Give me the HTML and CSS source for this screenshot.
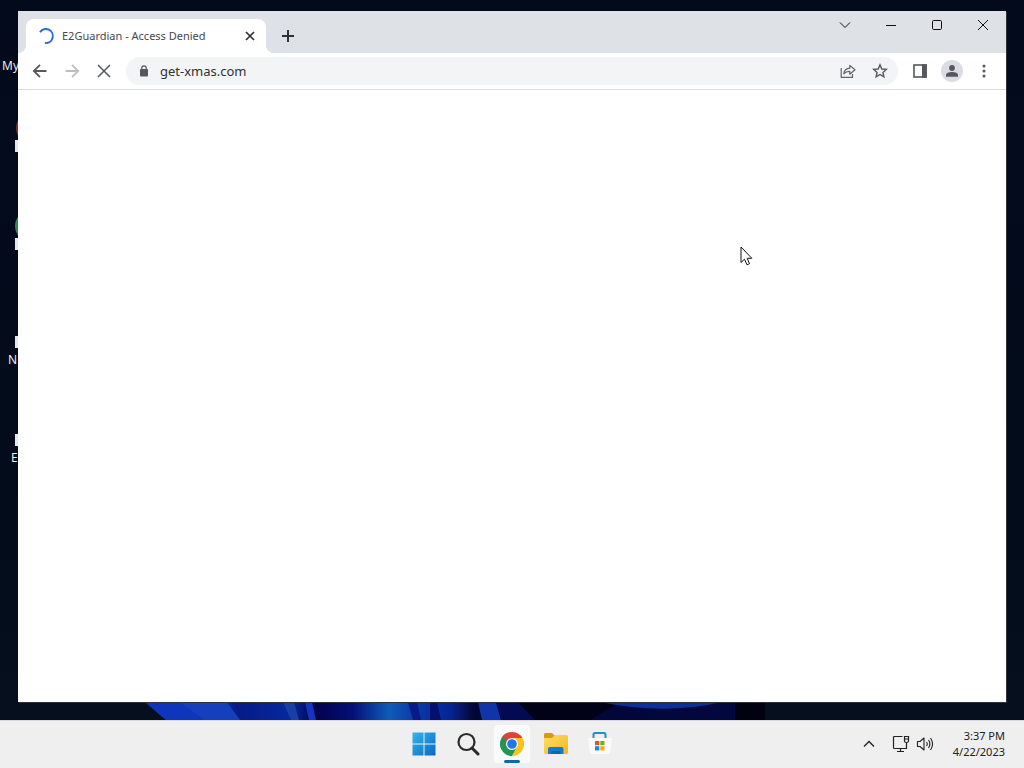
FILE: index.html
```html
<!DOCTYPE html>
<html lang="en">
<head>
<meta charset="utf-8">
<title>Desktop</title>
<link rel="stylesheet" href="styles.css">
</head>
<body>
<div class="desktop">
  <svg class="wallpaper" viewBox="0 0 1024 20" preserveAspectRatio="none" aria-hidden="true">
    <defs>
      <linearGradient id="bloom"><stop offset="0" stop-color="#0c2fae"/><stop offset=".1" stop-color="#1447c4"/><stop offset=".15" stop-color="#061b86"/><stop offset=".24" stop-color="#0528a0"/><stop offset=".28" stop-color="#02024a"/><stop offset=".34" stop-color="#040f78"/><stop offset=".4" stop-color="#0d5cb8"/><stop offset=".44" stop-color="#0a3ba8"/><stop offset=".5" stop-color="#062494"/><stop offset=".54" stop-color="#020634"/><stop offset="1" stop-color="#020740"/></linearGradient>
    </defs>
    <path d="M145 0H755L740 20H166Z" fill="url(#bloom)"/>
    <path d="M145 0H180L205 20H166Z" fill="#0d36bd"/>
    <path d="M180 0H227L240 20H205Z" fill="#1440bd"/>
    <path d="M283 0H294L299 20H291Z" fill="#173fa4"/>
    <path d="M305 0H312L316 20H309Z" fill="#1435bf"/>
    <path d="M408 0H417L421 20H413Z" fill="#08198a"/>
    <path d="M430 0H437L441 20H430Z" fill="#03106e"/>
    <path d="M478 0H496L501 20H482Z" fill="#1035a8"/>
    <path d="M496 0H518L535 20H501Z" fill="#020a54"/>
    <path d="M518 0H620L590 20H535Z" fill="#010118"/>
    <path d="M600 0Q665 15 722 0Z" fill="#0a309a"/>
    <path d="M735 0H765V20H735Z" fill="#01020f"/>
  </svg>

  <div class="shortcut shortcut-pc"><span>My PC</span></div>
  <div class="shortcut shortcut-red"><i class="disc red"></i><i class="arrow"></i></div>
  <div class="shortcut shortcut-green"><i class="disc green"></i><i class="arrow"></i></div>
  <div class="shortcut shortcut-n"><i class="arrow"></i><span>N</span></div>
  <div class="shortcut shortcut-e"><i class="arrow"></i><span>E</span></div>

  <main class="workspace">
    <section class="window">
      <header class="tabstrip">
        <div class="tab">
          <svg class="spinner" width="18" height="18" viewBox="0 0 18 18" fill="none" stroke="#2a6fd0" stroke-width="2"><path d="M3 5.2A7 7 0 1 1 8 16"/></svg>
          <span class="tab-title">E2Guardian - Access Denied</span>
          <button class="tab-close" aria-label="Close tab"><svg width="10" height="10" viewBox="0 0 10 10" stroke="#303236" stroke-width="1.7"><path d="M1 1L9 9M9 1L1 9"/></svg></button>
        </div>
        <button class="new-tab" aria-label="New tab"><svg width="14" height="14" viewBox="0 0 14 14" stroke="#303236" stroke-width="2"><path d="M7 1V13M1 7H13"/></svg></button>
        <div class="window-controls">
          <button aria-label="Search tabs"><svg width="12" height="12" viewBox="0 0 12 12" fill="none" stroke="#111"><path d="M1 3.5L6 8.5L11 3.5"/></svg></button>
          <button aria-label="Minimize"><svg width="12" height="12" viewBox="0 0 12 12" stroke="#111"><path d="M1 6.5H11"/></svg></button>
          <button aria-label="Maximize"><svg width="12" height="12" viewBox="0 0 12 12" fill="none" stroke="#111"><rect x="1.5" y="1.5" width="9" height="9" rx="1.2"/></svg></button>
          <button aria-label="Close"><svg width="12" height="12" viewBox="0 0 12 12" stroke="#111"><path d="M1 1L11 11M11 1L1 11"/></svg></button>
        </div>
      </header>
      <nav class="toolbar">
        <button class="tool" aria-label="Back"><svg width="16" height="16" viewBox="0 0 16 16" fill="none" stroke="#55585c" stroke-width="1.8"><path d="M14.5 8H2.5M8 1.8L1.8 8L8 14.2"/></svg></button>
        <button class="tool" aria-label="Forward"><svg width="16" height="16" viewBox="0 0 16 16" fill="none" stroke="#bcbec1" stroke-width="1.8"><path d="M1.5 8H13.5M8 1.8L14.2 8L8 14.2"/></svg></button>
        <button class="tool" aria-label="Stop"><svg width="14" height="14" viewBox="0 0 14 14" stroke="#55585c" stroke-width="1.5"><path d="M1 1L13 13M13 1L1 13"/></svg></button>
        <div class="omnibox">
          <svg class="lock" width="10" height="12" viewBox="0 0 10 12"><rect x="1" y="4" width="8" height="7.5" rx="1" fill="#55585c"/><path d="M2.8 4.5V3A2.2 2.2 0 0 1 7.2 3V4.5" fill="none" stroke="#55585c" stroke-width="1.2"/></svg>
          <input class="address" type="text" value="get-xmas.com" aria-label="Address">
          <button class="tool" aria-label="Share"><svg width="16" height="16" viewBox="0 0 16 16" fill="none" stroke="#5f6368" stroke-width="1.2" stroke-linejoin="round"><path d="M1.2 5V14.3H12.5V11M3.8 10.8C4.2 7.2 6.3 5.4 9.8 5.2V2.4L15 6.8L9.8 11.2V8.3C7.2 8.2 5.3 9 3.8 10.8Z"/></svg></button>
          <button class="tool" aria-label="Bookmark"><svg width="16" height="16" viewBox="0 0 16 16" fill="none" stroke="#55585c" stroke-width="1.4"><path d="M8 1.8L9.8 6L14.3 6.4L10.9 9.4L11.9 13.9L8 11.5L4.1 13.9L5.1 9.4L1.7 6.4L6.2 6Z"/></svg></button>
        </div>
        <button class="tool" aria-label="Side panel"><svg width="16" height="16" viewBox="0 0 16 16"><rect x="2" y="2" width="12" height="12" fill="none" stroke="#55585c" stroke-width="1.6"/><path d="M10 1.2H14.8V14.8H10Z" fill="#55585c"/></svg></button>
        <button class="tool avatar" aria-label="Profile"><svg width="14" height="14" viewBox="0 0 14 14" fill="#55585f"><circle cx="7" cy="4" r="2.9"/><path d="M1 12.8V11C1 8.8 4.5 8 7 8S13 8.8 13 11V12.8Z"/></svg></button>
        <button class="tool" aria-label="Menu"><svg width="4" height="14" viewBox="0 0 4 14" fill="#55585c"><circle cx="2" cy="2" r="1.5"/><circle cx="2" cy="7" r="1.5"/><circle cx="2" cy="12" r="1.5"/></svg></button>
      </nav>
      <div class="page"></div>
    </section>
  </main>

  <footer class="taskbar">
    <div></div>
    <div class="apps">
      <button class="app" aria-label="Start"><svg width="24" height="24" viewBox="0 0 24 24"><defs><linearGradient id="win" x2="1" y2="1"><stop stop-color="#35b5ee"/><stop offset="1" stop-color="#0669c4"/></linearGradient></defs><path d="M.5 .5H11.5V11.5H.5ZM12.5 .5H23.5V11.5H12.5ZM.5 12.5H11.5V23.5H.5ZM12.5 12.5H23.5V23.5H12.5Z" fill="url(#win)"/></svg></button>
      <button class="app" aria-label="Search"><svg width="24" height="24" viewBox="0 0 24 24" fill="none" stroke="#292929"><circle cx="10.5" cy="10" r="8" stroke-width="2.2"/><path d="M16 16L22 22" stroke-width="3" stroke-linecap="round"/></svg></button>
      <button class="app active" aria-label="Chrome"><svg width="24" height="24" viewBox="0 0 24 24"><path d="M12 12L1.6 6A12 12 0 0 1 22.4 6Z" fill="#db4437"/><path d="M1.6 6A12 12 0 0 0 12 24L17.2 15L12 12Z" fill="#219653"/><path d="M22.4 6A12 12 0 0 1 12 24L17.2 15L12 6Z" fill="#fbc21a"/><path d="M1.6 6L6.8 15L12 12V6H22.4L20 3H4Z" fill="#db4437"/><path d="M1.6 6L6.8 15L8 12L4 5Z" fill="#219653"/><circle cx="12" cy="12" r="6" fill="#fff"/><circle cx="12" cy="12" r="4.8" fill="#2475e8"/></svg></button>
      <button class="app" aria-label="File Explorer"><svg width="26" height="24" viewBox="0 0 26 24"><defs><linearGradient id="folder" x2="1" y2="1"><stop stop-color="#ffdc67"/><stop offset="1" stop-color="#f2b81f"/></linearGradient></defs><path d="M1 4V2.5Q1 1 2.5 1H9L12 4V8H1Z" fill="#d79a10"/><path d="M1 6H9L12 3H23.5Q25 3 25 4.5V20.5Q25 22 23.5 22H2.5Q1 22 1 20.5Z" fill="url(#folder)"/><path d="M5 22V17Q5 15 7 15H18.5Q20.5 15 20.5 17V22Z" fill="#167bd0"/><path d="M8.5 19H17.5V22H8.5Z" fill="#0864b4"/></svg></button>
      <button class="app" aria-label="Store"><svg width="26" height="26" viewBox="0 0 26 26"><path d="M1 7H25L23 21Q22.8 23 21 23H5Q3.2 23 3 21Z" fill="#fbfbfb"/><path d="M6.5 7V3.5Q6.5 2 8 2H17Q18.5 2 18.5 3.5V7" fill="none" stroke="#1c91c7" stroke-width="2"/><path d="M8 10H12.3V14.2H8Z" fill="#e35325"/><path d="M13.3 10H17.5V14.2H13.3Z" fill="#78ad19"/><path d="M8 15.2H12.3V19.5H8Z" fill="#168fd7"/><path d="M13.3 15.2H17.5V19.5H13.3Z" fill="#f2ad16"/></svg></button>
    </div>
    <div class="tray">
      <button class="tray-more" aria-label="Show hidden icons"><svg width="12" height="12" viewBox="0 0 12 12" fill="none" stroke="#222" stroke-width="1.3"><path d="M1 8.5L6 3.5L11 8.5"/></svg></button>
      <button class="tray-status" aria-label="Network and volume">
        <svg width="18" height="18" viewBox="0 0 18 18" fill="none" stroke="#222" stroke-width="1.2"><path d="M10.5 1.5H2.5Q1.5 1.5 1.5 2.5V12.5Q1.5 13.5 2.5 13.5H14.5V7.5M5 16.5H12M8.5 13.5V16.5M12.5 1.5H16.5V6Q16.5 7.5 14.5 7.5T12.5 6ZM12.5 4H16.5"/></svg>
        <svg width="18" height="18" viewBox="0 0 18 18" fill="none" stroke="#222" stroke-width="1.1" stroke-linejoin="round"><path d="M1.5 6.5H4L8 3V15L4 11.5H1.5ZM10.5 7Q12 9 10.5 11M12.5 5Q15.3 9 12.5 13M14.5 3Q18.6 9 14.5 15"/></svg>
      </button>
      <div class="clock"><time datetime="15:37">3:37 PM</time><time datetime="2023-04-22">4/22/2023</time></div>
    </div>
  </footer>

  <svg class="cursor" width="13" height="21" viewBox="0 0 13 21" aria-hidden="true"><path d="M1 1V16.5L4.5 13.2L7 18.8L9.5 17.7L7.2 12.3H11.8Z" fill="#fff" stroke="#111"/></svg>
</div>
</body>
</html>
```
FILE: styles.css
```css
* { box-sizing: border-box; }
body { margin: 0; font-family: "Noto Sans", "Open Sans", sans-serif; font-size: 12px; color: #202124; }
button { display: flex; align-items: center; justify-content: center; flex: none; padding: 0; border: 0; background: none; }
svg { display: block; flex: none; }

.desktop { position: relative; display: flex; flex-direction: column; height: 100vh; overflow: hidden; background: linear-gradient(#020a1c, #030c1a 70%, #06101e); }
.wallpaper { position: absolute; left: 0; bottom: 48px; width: 100%; height: 18px; }

.shortcut { position: absolute; color: #e8eaee; line-height: 16px; white-space: nowrap; }
.shortcut span { display: block; }
.shortcut-pc { left: 2px; top: 58px; }
.shortcut-red { left: 15px; top: 112px; }
.shortcut-green { left: 15px; top: 210px; }
.shortcut-n { left: 8px; top: 336px; }
.shortcut-e { left: 11px; top: 434px; }
.shortcut i { display: block; }
.disc { width: 32px; height: 32px; border-radius: 50%; }
.red { margin-left: 1px; background: #8a2a2c; }
.green { background: #328653; }
.arrow { width: 12px; height: 12px; background: #e6e8ee; }
.shortcut-red .arrow, .shortcut-green .arrow { margin-top: -4px; }
.shortcut-n .arrow { margin: 0 0 4px 7px; }
.shortcut-e .arrow { margin: 0 0 4px 4px; }

.workspace { position: relative; flex: 1; display: flex; min-height: 0; padding: 11px 18px 18px; }
.window { flex: 1; display: flex; flex-direction: column; min-width: 0; background: #fff; box-shadow: 1px 1px 0 #30343a; }
.tabstrip { display: flex; height: 42px; padding-left: 8px; background: #dee1e6; }
.tab { position: relative; display: flex; align-items: center; gap: 7px; width: 240px; height: 34px; margin-top: 8px; padding: 0 8px 0 11px; border-radius: 8px 8px 0 0; background: #fff; }
.tab::before, .tab::after { content: ""; position: absolute; bottom: 0; width: 8px; height: 8px; }
.tab::before { left: -8px; background: radial-gradient(circle at 0 0, transparent 8px, #fff 8px); }
.tab::after { right: -8px; background: radial-gradient(circle at 100% 0, transparent 8px, #fff 8px); }
.tab-title { flex: 1; color: #45484d; font-size: 11px; line-height: 16px; white-space: nowrap; }
.tab-close { width: 16px; height: 16px; }
.new-tab { width: 28px; height: 28px; margin: 11px 0 0 8px; }
.window-controls { display: flex; margin-left: auto; }
.window-controls button { width: 46px; height: 28px; }

.toolbar { display: flex; align-items: center; gap: 4px; height: 37px; padding: 0 8px; border-bottom: 1px solid #dadce0; }
.tool { width: 28px; height: 28px; }
.omnibox { flex: 1; display: flex; align-items: center; gap: 4px; min-width: 0; height: 28px; margin: 0 4px; padding: 0 4px 0 13px; border-radius: 14px; background: #f3f4f5; }
.address { flex: 1; min-width: 0; padding: 0 7px; border: 0; outline: 0; background: none; color: #303236; font: 13px "Noto Sans", "Open Sans", sans-serif; }
.avatar { width: 22px; height: 22px; margin: 0 3px; border-radius: 50%; background: #dadde4; }
.page { flex: 1; }

.taskbar { position: relative; display: grid; grid-template-columns: 1fr auto 1fr; align-items: center; height: 48px; padding-bottom: 2px; border-top: 1px solid #d6d8e4; background: #efefef; }
.apps { display: flex; gap: 8px; }
.app { position: relative; width: 36px; height: 38px; border-radius: 4px; }
.active { background: #fafafa; }
.active::after { content: ""; position: absolute; bottom: 0; width: 16px; height: 3px; border-radius: 2px; background: #0d69b5; }
.tray { display: flex; align-items: center; justify-content: flex-end; gap: 8px; padding-right: 19px; }
.tray-more { width: 24px; height: 32px; }
.tray-status { gap: 6px; height: 32px; margin-right: 8px; padding: 0 3px; }
.clock { display: flex; flex-direction: column; align-items: flex-end; font-size: 11px; line-height: 16px; white-space: nowrap; }

.cursor { position: absolute; left: 740px; top: 246px; }
```
